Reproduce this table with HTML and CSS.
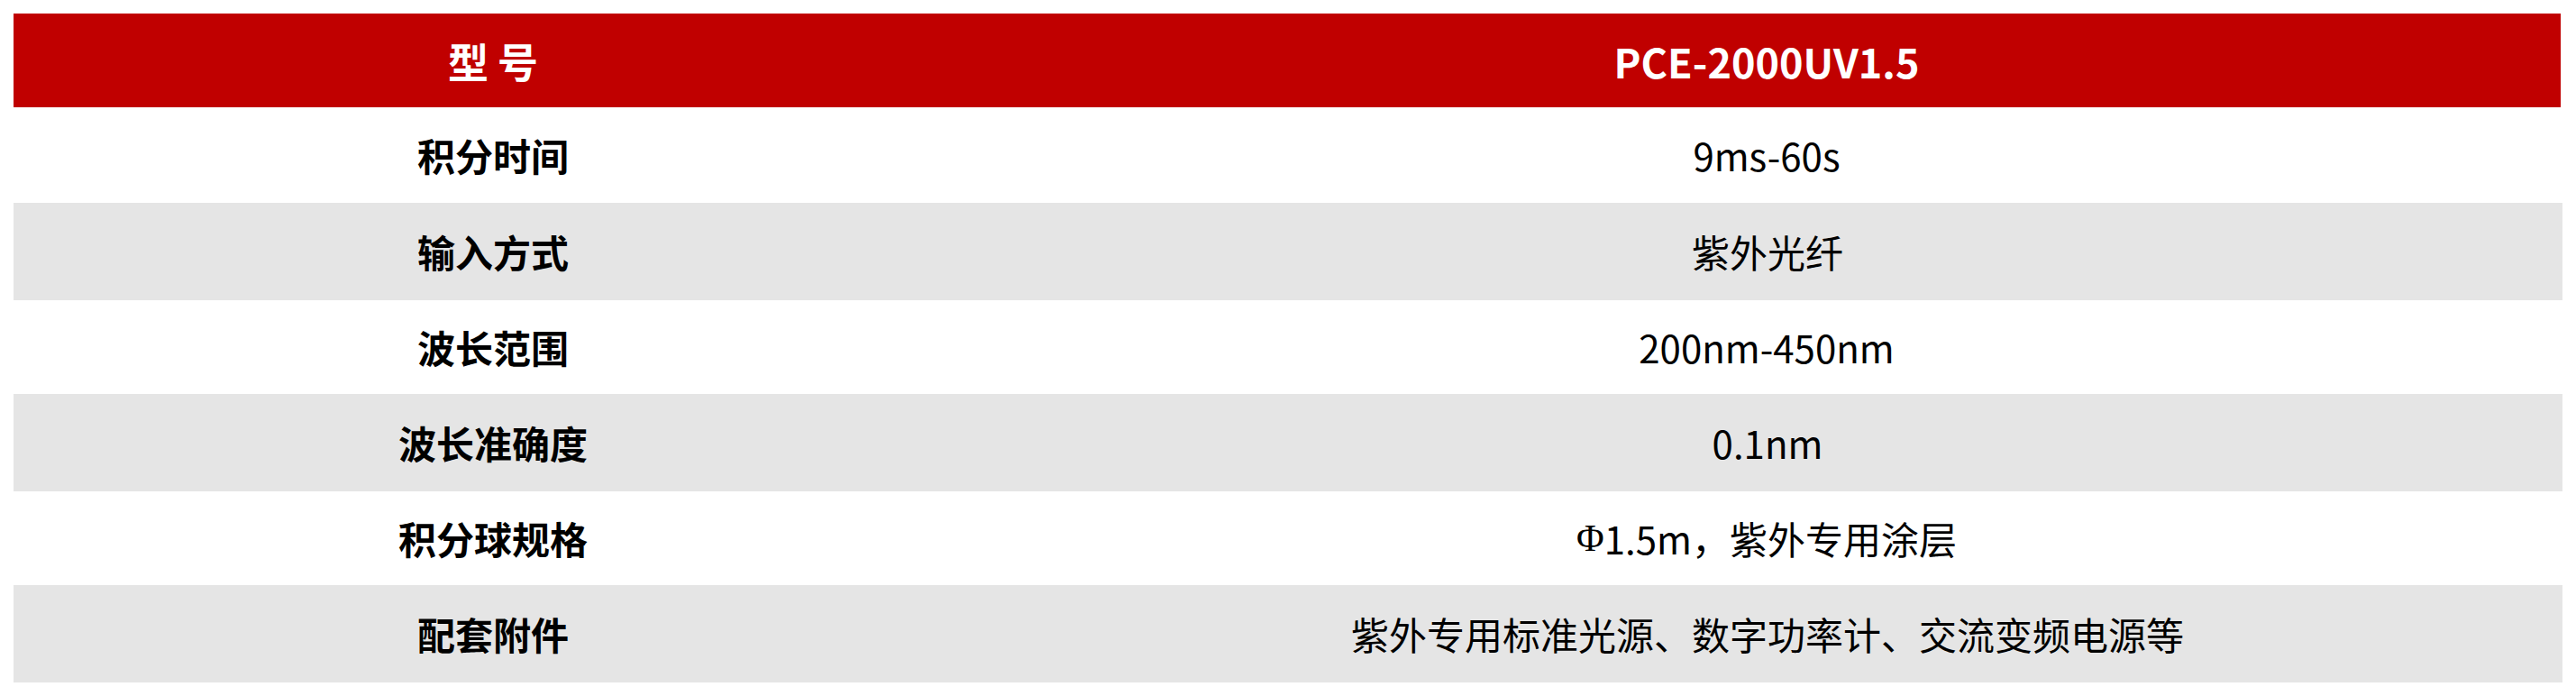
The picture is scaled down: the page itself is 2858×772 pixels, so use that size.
FILE: index.html
```html
<!DOCTYPE html>
<html lang="zh-CN">
<head>
<meta charset="utf-8">
<title>PCE-2000UV1.5</title>
<link rel="stylesheet" href="styles.css">
</head>
<body>
<div class="spec-table">
  <div class="row head">
    <div class="cell label">型 号</div>
    <div class="cell value">PCE-2000UV1.5</div>
  </div>
  <div class="row r1">
    <div class="cell label">积分时间</div>
    <div class="cell value">9ms-60s</div>
  </div>
  <div class="row r2 alt">
    <div class="cell label">输入方式</div>
    <div class="cell value">紫外光纤</div>
  </div>
  <div class="row r3">
    <div class="cell label">波长范围</div>
    <div class="cell value">200nm-450nm</div>
  </div>
  <div class="row r4 alt">
    <div class="cell label">波长准确度</div>
    <div class="cell value">0.1nm</div>
  </div>
  <div class="row r5">
    <div class="cell label">积分球规格</div>
    <div class="cell value"><span class="phi">Φ</span>1.5m，紫外专用涂层</div>
  </div>
  <div class="row r6 alt">
    <div class="cell label">配套附件</div>
    <div class="cell value">紫外专用标准光源、数字功率计、交流变频电源等</div>
  </div>
</div>
</body>
</html>
```

FILE: styles.css
```css
html, body {
  margin: 0;
  padding: 0;
  background: #ffffff;
}

body {
  font-family: "Noto Sans CJK SC", "Noto Sans", sans-serif;
  color: #000000;
}

.spec-table {
  margin: 15px 0 0 15px;
  width: 2826px;
  display: flex;
  flex-direction: column;
}

.row {
  display: grid;
  grid-template-columns: 1064px 1fr;
  height: 106px;
}

.row.head { height: 104px; background: #c00000; color: #ffffff; }
.row.r1 { height: 106px; }
.row.r2 { height: 108px; }
.row.r3 { height: 104px; }
.row.r4 { height: 108px; }
.row.r5 { height: 104px; }
.row.r6 { height: 108px; }

.row.alt {
  background: #e5e5e5;
  margin-right: -2px;
}

.cell {
  display: flex;
  align-items: center;
  justify-content: center;
  font-size: 42px;
  line-height: 1;
  white-space: pre;
}

.label {
  font-weight: 700;
}

.value {
  font-weight: 400;
}

.head .cell {
  font-size: 45px;
  font-weight: 700;
}

.phi {
  font-family: "Liberation Serif", "DejaVu Serif", serif;
  font-weight: 400;
}
```
